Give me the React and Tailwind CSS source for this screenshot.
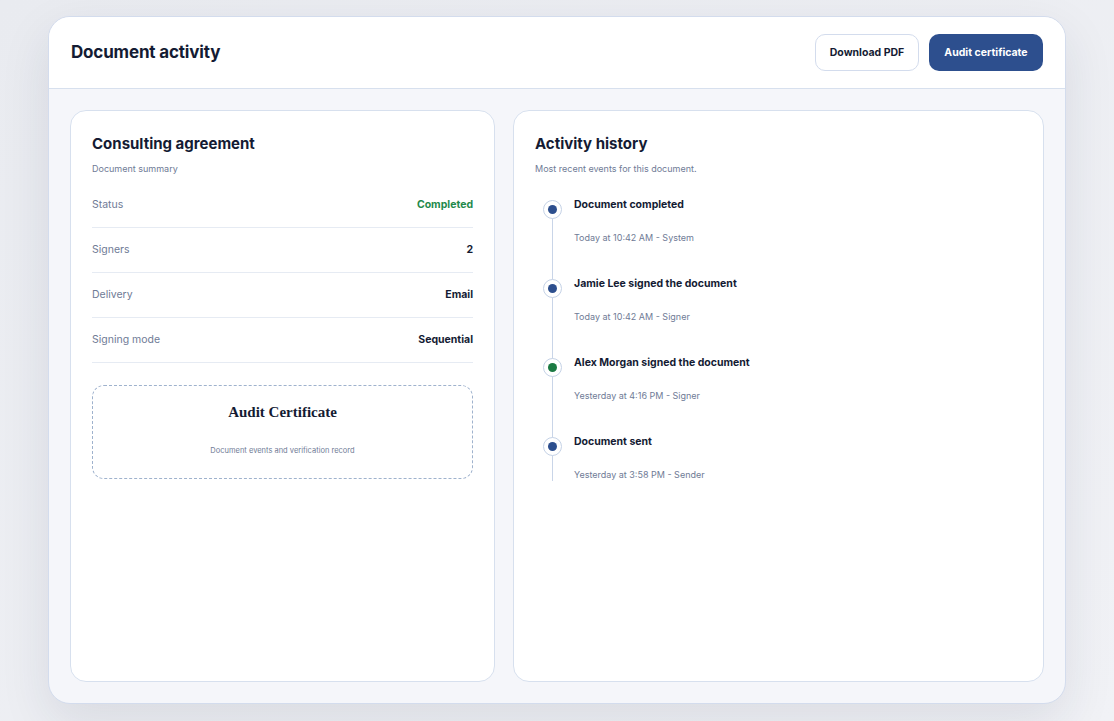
import React from "react";

const rows = [
  { label: "Status", value: "Completed", tone: "text-[#1f8a4c]" },
  { label: "Signers", value: "2", tone: "text-[#141b33]" },
  { label: "Delivery", value: "Email", tone: "text-[#141b33]" },
  { label: "Signing mode", value: "Sequential", tone: "text-[#141b33]" },
];

const events = [
  { title: "Document completed", meta: "Today at 10:42 AM - System", dot: "bg-[#2d4f8e]" },
  { title: "Jamie Lee signed the document", meta: "Today at 10:42 AM - Signer", dot: "bg-[#2d4f8e]" },
  { title: "Alex Morgan signed the document", meta: "Yesterday at 4:16 PM - Signer", dot: "bg-[#1b7a43]" },
  { title: "Document sent", meta: "Yesterday at 3:58 PM - Sender", dot: "bg-[#2d4f8e]" },
];

const App = () => {
  return (
    <div
      className="min-h-screen w-full bg-gradient-to-br from-[#e9ebf0] to-[#f1f2f6] pt-4 pl-12"
      style={{ fontFamily: "Inter, 'Noto Sans', sans-serif" }}
    >
      <div className="w-[1018px] h-[688px] flex flex-col rounded-[22px] border border-[#d3dced] bg-[#f5f6fa] overflow-hidden shadow-[0_18px_50px_rgba(30,42,72,0.10)]">
        {/* header */}
        <div className="h-[72px] shrink-0 flex items-center justify-between bg-white border-b border-[#d7e0ee] pl-[22px] pr-[22px]">
          <h1 className="text-[17px] font-bold text-[#141b33] tracking-[-0.01em]">Document activity</h1>
          <div className="flex items-center gap-[10px]">
            <button className="h-[37px] w-[104px] rounded-[10px] border border-[#d3dced] bg-white text-[10.5px] font-bold text-[#141b33]">
              Download PDF
            </button>
            <button className="h-[37px] w-[114px] rounded-[10px] bg-[#2d4f8e] text-[10.5px] font-bold text-white">
              Audit certificate
            </button>
          </div>
        </div>

        {/* body */}
        <div className="flex-1 flex gap-[18px] p-[21px]">
          <div className="w-[425px] shrink-0 rounded-[16px] border border-[#d7e0ee] bg-white px-[21px] pt-[22px]">
            <h2 className="text-[15px] leading-[22px] font-bold text-[#141b33]">Consulting agreement</h2>
            <p className="mt-[8px] text-[9px] leading-[12px] text-[#6f7b96]">Document summary</p>
            <div className="mt-[8px]">
              {rows.map((r) => (
                <div
                  key={r.label}
                  className="h-[45px] flex items-center justify-between border-b border-[#e6ebf3]"
                >
                  <span className="text-[10.5px] text-[#6f7b96]">{r.label}</span>
                  <span className={`text-[10.5px] font-bold ${r.tone}`}>{r.value}</span>
                </div>
              ))}
            </div>
            <div className="mt-[22px] h-[94px] rounded-[12px] border border-dashed border-[#9fb2cd] flex flex-col items-center pt-[15px]">
              <div
                className="text-[15px] font-bold text-[#141b33]"
                style={{ fontFamily: "'Liberation Serif', 'DejaVu Serif', serif" }}
              >
                Audit Certificate
              </div>
              <div className="mt-[21px] text-[7.5px] text-[#6f7b96]">Document events and verification record</div>
            </div>
          </div>

          <div className="flex-1 rounded-[16px] border border-[#d7e0ee] bg-white px-[21px] pt-[22px]">
            <h2 className="text-[15px] leading-[22px] font-bold text-[#141b33]">Activity history</h2>
            <p className="mt-[8px] text-[9px] leading-[12px] text-[#6f7b96]">Most recent events for this document.</p>
            <div className="relative mt-[22px] pl-[8px]">
              <div className="absolute left-[16.5px] top-[12px] bottom-0 w-px bg-[#c9d5e8]" />
              {events.map((e, i) => (
                <div key={e.title} className={`relative flex gap-[12px] ${i < events.length - 1 ? "pb-[32px]" : ""}`}>
                  <div className="mt-[3px] h-[19px] w-[19px] shrink-0 rounded-full border-[1.5px] border-[#c5d2e6] bg-white flex items-center justify-center">
                    <div className={`h-[9px] w-[9px] rounded-full ${e.dot}`} />
                  </div>
                  <div>
                    <div className="text-[10.5px] leading-[16px] font-bold text-[#141b33]">{e.title}</div>
                    <div className="mt-[19px] text-[9px] leading-[12px] text-[#6f7b96]">{e.meta}</div>
                  </div>
                </div>
              ))}
            </div>
          </div>
        </div>
      </div>
    </div>
  );
};

export default App;
